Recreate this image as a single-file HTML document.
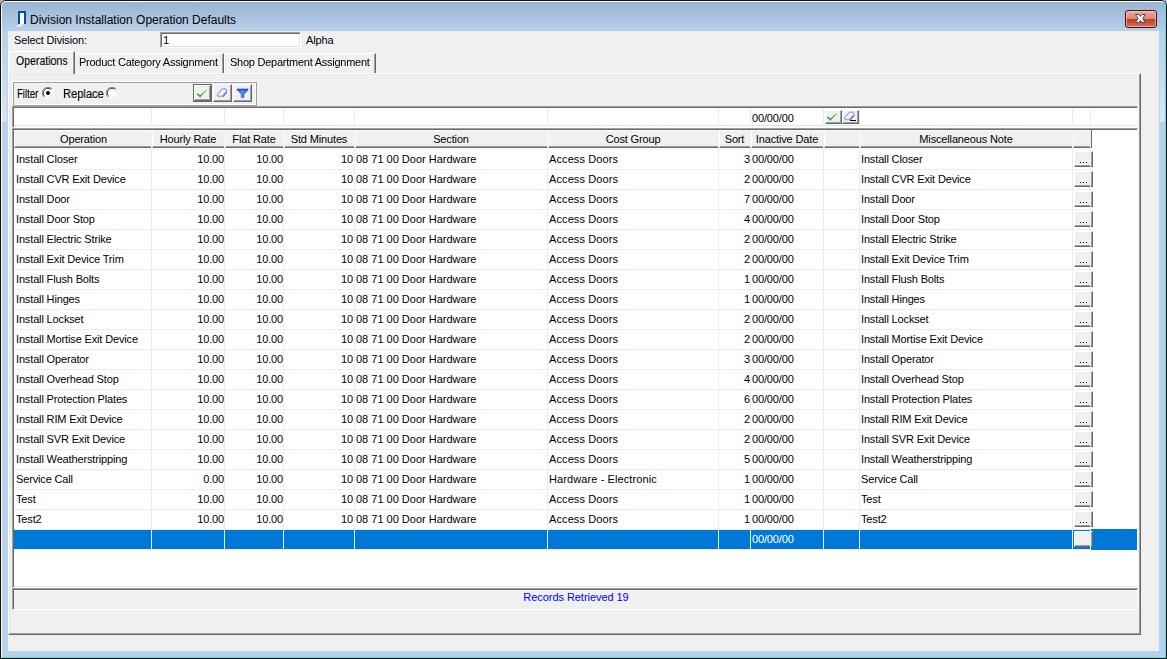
<!DOCTYPE html><html><head><meta charset="utf-8"><title>Division Installation Operation Defaults</title><style>

html,body{margin:0;padding:0}
body{width:1167px;height:659px;overflow:hidden;position:relative;background:#b4b4b4;font-family:"Liberation Sans",sans-serif;font-size:11px;color:#000;letter-spacing:-0.15px}
div,span{position:absolute;box-sizing:border-box;white-space:nowrap}
#win{left:0;top:0;width:1167px;height:659px;background:#b9d1ea;border:1px solid #111;border-radius:6px 6px 0 0;overflow:hidden}
#hl{left:0;top:0;width:1165px;height:657px;border-top:1px solid #fff;border-left:1px solid #fff;border-right:1px solid #3fe2ff;border-bottom:1px solid #3fe2ff;border-radius:5px 5px 0 0}
#cap{left:1px;top:1px;width:1163px;height:29px;background:linear-gradient(#98b3d1,#b9d1ea)}
#lgl{left:1px;top:1px;width:5px;height:120px;background:linear-gradient(#9bb6d3 0%,#b7cfe8 25%,#d9e7f5 100%)}
#rgl{left:1159px;top:1px;width:5px;height:120px;background:linear-gradient(#9bb6d3 0%,#b7cfe8 25%,#d9e7f5 100%)}
#title{left:29px;top:11px;font-size:12px;line-height:16px;letter-spacing:0;color:#000}
#client{left:7px;top:30px;width:1151px;height:620px;background:#f0f0f0}
.t{line-height:13px;height:13px}

</style></head><body>
<div id="win">
<div id="cap"></div><div id="lgl"></div><div id="rgl"></div><div id="hl"></div>
<svg style="position:absolute;left:13px;top:9px" width="16" height="18" viewBox="14 10 16 18"><polygon points="14.5,26.7 22,26.7 23.6,24 19.5,24" fill="#e2eaf4"/><rect x="18" y="11" width="8" height="13" fill="#0050a0"/><rect x="20" y="13" width="4" height="11" fill="#fff"/></svg>
<div id="title">Division Installation Operation Defaults</div>
<div style="left:1124px;top:9px;width:32px;height:18px;border:1px solid #47121c;border-radius:3px;background:linear-gradient(#e9a99b 0%,#dc8876 48%,#bd3a1c 50%,#d4705a 100%);box-shadow:inset 0 0 0 1px rgba(255,220,210,.55)"></div>
<svg style="position:absolute;left:1133px;top:12px" width="14" height="12" viewBox="1134 13 14 12"><polygon points="1135.5,14.5 1138.8,14.5 1140.4,16.5 1142,14.5 1145.3,14.5 1142.5,18.5 1145.3,22.5 1142,22.5 1140.4,20.5 1138.8,22.5 1135.5,22.5 1138.3,18.5" fill="#fff" stroke="#474c66" stroke-width="1" stroke-linejoin="round"/></svg>
<div id="client">
</div>
</div>
<div class="t" style="left:14px;top:34px;">Select Division:</div>
<div style="left:160px;top:32px;width:141px;height:16px;background:#fff;border-top:1px solid #a0a0a0;border-left:1px solid #a0a0a0;border-right:1px solid #fff;border-bottom:1px solid #fff"><div style="left:0;top:0;width:139px;height:14px;border-top:1px solid #696969;border-left:1px solid #696969;border-right:1px solid #e3e3e3;border-bottom:1px solid #e3e3e3"></div></div>
<div class="t" style="left:163px;top:34px;">1</div>
<div class="t" style="left:306px;top:34px;">Alpha</div>
<div style="left:8px;top:73px;width:1133px;height:562px;border-top:1px solid #fff;border-left:1px solid #fff;border-right:1px solid #696969;border-bottom:1px solid #696969"><div style="left:0;top:0;width:1131px;height:560px;border-top:1px solid #e8e8e8;border-left:1px solid #e8e8e8;border-right:1px solid #a0a0a0;border-bottom:1px solid #a0a0a0"></div></div>
<div style="left:8px;top:51px;width:67px;height:23px;background:#f0f0f0;border-top:1px solid #fff;border-left:1px solid #fff;border-right:1px solid #696969"><div style="left:0;top:0;width:65px;height:22px;border-right:1px solid #a0a0a0"></div></div>
<div class="t" style="left:16px;top:55px;font-size:12px;letter-spacing:0;transform:scaleX(.88);transform-origin:0 0;will-change:transform;-webkit-text-stroke:.15px #000">Operations</div>
<div style="left:75px;top:53px;width:149px;height:20px;border-top:1px solid #fff;border-right:1px solid #696969"><div style="left:0;top:0;width:148px;height:19px;border-right:1px solid #a0a0a0"></div></div>
<div class="t" style="left:79px;top:56px;letter-spacing:-0.25px">Product Category Assignment</div>
<div style="left:224px;top:53px;width:152px;height:20px;border-top:1px solid #fff;border-left:1px solid #fff;border-right:1px solid #696969"><div style="left:0;top:0;width:150px;height:19px;border-right:1px solid #a0a0a0"></div></div>
<div class="t" style="left:230px;top:56px;letter-spacing:-0.25px">Shop Department Assignment</div>
<div style="left:12px;top:81px;width:244px;height:24px;border:1px solid #fff"></div>
<div style="left:13px;top:82px;width:244px;height:24px;border:1px solid #a0a0a0"></div>
<div class="t" style="left:17px;top:88px;font-size:12px;letter-spacing:0;transform:scaleX(.80);transform-origin:0 0;will-change:transform;-webkit-text-stroke:.15px #000">Filter</div>
<div class="t" style="left:63px;top:88px;font-size:12px;letter-spacing:0;transform:scaleX(.93);transform-origin:0 0;will-change:transform;-webkit-text-stroke:.15px #000">Replace</div>
<svg style="position:absolute;left:42px;top:87px" width="12" height="12" viewBox="0 0 12 12"><circle cx="6" cy="6" r="5.5" fill="#fff"/><path d="M1.9 10.1 A5.5 5.5 0 0 1 10.1 1.9" fill="none" stroke="#808080" stroke-width="1"/><path d="M2.7 9.3 A4.5 4.5 0 0 1 9.3 2.7" fill="none" stroke="#404040" stroke-width="1"/><path d="M10.1 1.9 A5.5 5.5 0 0 1 1.9 10.1" fill="none" stroke="#fff" stroke-width="1"/><path d="M9.3 2.7 A4.5 4.5 0 0 1 2.7 9.3" fill="none" stroke="#e3e3e3" stroke-width="1"/><circle cx="6" cy="6" r="2" fill="#000"/></svg>
<svg style="position:absolute;left:106px;top:87px" width="12" height="12" viewBox="0 0 12 12"><circle cx="6" cy="6" r="5.5" fill="#fff"/><path d="M1.9 10.1 A5.5 5.5 0 0 1 10.1 1.9" fill="none" stroke="#808080" stroke-width="1"/><path d="M2.7 9.3 A4.5 4.5 0 0 1 9.3 2.7" fill="none" stroke="#404040" stroke-width="1"/><path d="M10.1 1.9 A5.5 5.5 0 0 1 1.9 10.1" fill="none" stroke="#fff" stroke-width="1"/><path d="M9.3 2.7 A4.5 4.5 0 0 1 2.7 9.3" fill="none" stroke="#e3e3e3" stroke-width="1"/></svg>
<div style="left:193px;top:84px;width:19px;height:18px;border:1px solid #696969;background:#f0f0f0"><div style="left:0;top:0;width:17px;height:16px;border-top:1px solid #fff;border-left:1px solid #fff;border-right:1px solid #696969;border-bottom:1px solid #696969"><div style="left:0;top:0;width:15px;height:14px;border-right:1px solid #a0a0a0;border-bottom:1px solid #a0a0a0"></div></div></div>
<div style="left:213px;top:84px;width:19px;height:18px;background:#f0f0f0;border-top:1px solid #fff;border-left:1px solid #fff;border-right:1px solid #696969;border-bottom:1px solid #696969"><div style="left:0;top:0;width:17px;height:16px;border-right:1px solid #a0a0a0;border-bottom:1px solid #a0a0a0"></div></div>
<div style="left:233px;top:84px;width:19px;height:18px;background:#f0f0f0;border-top:1px solid #fff;border-left:1px solid #fff;border-right:1px solid #696969;border-bottom:1px solid #696969"><div style="left:0;top:0;width:17px;height:16px;border-right:1px solid #a0a0a0;border-bottom:1px solid #a0a0a0"></div></div>
<svg style="position:absolute;left:195px;top:87px" width="15" height="13" viewBox="195 87 15 13"><path d="M196.7 94.3 L198.0 93.3 L200 95.2 L203.2 92.4 L206.5 89.8 L206.9 90.2 L203.6 93.60000000000001 L200.3 97.5 Z" fill="#46b646"/><path d="M197.2 94.0 L199.9 96.5 L201.6 94.9" fill="none" stroke="#32a232" stroke-width="1" stroke-linejoin="round"/></svg>
<svg style="position:absolute;left:215px;top:86px" width="15" height="14" viewBox="215 86 15 14"><polygon points="217.3,94.60000000000001 222.3,88.8 225.9,89.0 226.9,91.0 222.0,96.4 218.0,96.60000000000001" fill="#eef2fa" stroke="#6f8fca" stroke-width="1" stroke-linejoin="round"/><polygon points="222.4,96.7 227.0,91.60000000000001 227.0,92.8 223.2,97.10000000000001" fill="#3b5184"/><polygon points="217.8,95.60000000000001 222.0,95.4 222.4,96.8 218.2,96.9" fill="#9fb4da"/></svg>
<svg style="position:absolute;left:235px;top:87px" width="15" height="13" viewBox="235 87 15 13"><defs><linearGradient id="fg" x1="0" x2="1"><stop offset="0" stop-color="#1a4fe0"/><stop offset=".45" stop-color="#5c8cf5"/><stop offset="1" stop-color="#1a4fe0"/></linearGradient></defs><path d="M237.2 89 L248 89 L248 90 L244 94 L244 97.6 L241.3 97.6 L241.3 94 L237.2 90 Z" fill="url(#fg)" stroke="#1c4cdc" stroke-width=".6" stroke-linejoin="round"/><rect x="237" y="89" width="11.2" height="1.2" fill="#1a48d0"/></svg>
<div style="left:12px;top:106px;width:1126px;height:22px;background:#fff;border-top:1px solid #a0a0a0;border-left:1px solid #a0a0a0;border-bottom:1px solid #fff;border-right:1px solid #fff"><div style="left:0;top:0;width:1124px;height:20px;border-top:1px solid #696969;border-left:1px solid #696969"></div></div>
<div style="left:14px;top:125px;width:1123px;height:1px;background:#e3e3e3"></div>
<div style="left:151px;top:108px;width:1px;height:18px;background:#ececec"></div>
<div style="left:224px;top:108px;width:1px;height:18px;background:#ececec"></div>
<div style="left:283px;top:108px;width:1px;height:18px;background:#ececec"></div>
<div style="left:354px;top:108px;width:1px;height:18px;background:#ececec"></div>
<div style="left:547px;top:108px;width:1px;height:18px;background:#ececec"></div>
<div style="left:718px;top:108px;width:1px;height:18px;background:#ececec"></div>
<div style="left:750px;top:108px;width:1px;height:18px;background:#ececec"></div>
<div style="left:823px;top:108px;width:1px;height:18px;background:#ececec"></div>
<div style="left:859px;top:108px;width:1px;height:18px;background:#ececec"></div>
<div style="left:1072px;top:108px;width:1px;height:18px;background:#ececec"></div>
<div style="left:1090px;top:108px;width:1px;height:18px;background:#ececec"></div>
<div class="t" style="left:752px;top:112px;">00/00/00</div>
<div style="left:825px;top:110px;width:17px;height:14px;background:#f0f0f0;border-top:1px solid #fff;border-left:1px solid #fff;border-right:1px solid #696969;border-bottom:1px solid #696969"><div style="left:0;top:0;width:15px;height:12px;border-right:1px solid #a0a0a0;border-bottom:1px solid #a0a0a0"></div></div>
<div style="left:842px;top:110px;width:17px;height:14px;background:#f0f0f0;border-top:1px solid #fff;border-left:1px solid #fff;border-right:1px solid #696969;border-bottom:1px solid #696969"><div style="left:0;top:0;width:15px;height:12px;border-right:1px solid #a0a0a0;border-bottom:1px solid #a0a0a0"></div></div>
<svg style="position:absolute;left:826px;top:111px" width="14" height="11" viewBox="826 111 14 11"><path d="M826.9000000000001 117.6 L828.2 116.6 L830.2 118.5 L833.4000000000001 115.7 L836.7 113.1 L837.1 113.5 L833.8000000000001 116.9 L830.5 120.8 Z" fill="#46b646"/><path d="M827.4000000000001 117.3 L830.1 119.8 L831.8000000000001 118.2" fill="none" stroke="#32a232" stroke-width="1" stroke-linejoin="round"/></svg>
<svg style="position:absolute;left:843px;top:110px" width="15" height="12" viewBox="843 110 15 12"><polygon points="844.5999999999999,117.80000000000001 849.5999999999999,112.0 853.1999999999999,112.2 854.1999999999999,114.2 849.3,119.60000000000001 845.3,119.80000000000001" fill="#eef2fa" stroke="#6f8fca" stroke-width="1" stroke-linejoin="round"/><polygon points="849.6999999999999,119.9 854.3,114.80000000000001 854.3,116.0 850.5,120.30000000000001" fill="#3b5184"/><polygon points="845.0999999999999,118.80000000000001 849.3,118.60000000000001 849.6999999999999,120.0 845.5,120.10000000000001" fill="#9fb4da"/></svg>
<div style="left:850px;top:120px;width:6px;height:1px;background:#000"></div>
<div style="left:12px;top:128px;width:1126px;height:460px;background:#fff;border-top:1px solid #a0a0a0;border-left:1px solid #a0a0a0;border-bottom:1px solid #fff;border-right:1px solid #fff"><div style="left:0;top:0;width:1124px;height:458px;border-top:1px solid #696969;border-left:1px solid #696969"></div></div>
<div style="left:14px;top:586px;width:1123px;height:1px;background:#e3e3e3"></div>
<div style="left:14px;top:130px;width:1077px;height:18px;background:#f0f0f0"></div>
<div style="left:14px;top:130px;width:137px;height:18px;background:#f0f0f0;border-top:1px solid #fff;border-left:1px solid #fff;border-bottom:1px solid #696969"><div style="left:0;top:0;width:136px;height:16px;border-bottom:1px solid #a0a0a0"></div></div>
<div class="t" style="left:15px;top:133px;width:137px;text-align:center">Operation</div>
<div style="left:152px;top:130px;width:72px;height:18px;background:#f0f0f0;border-top:1px solid #fff;border-left:1px solid #fff;border-bottom:1px solid #696969"><div style="left:0;top:0;width:71px;height:16px;border-bottom:1px solid #a0a0a0"></div></div>
<div class="t" style="left:152px;top:133px;width:72px;text-align:center">Hourly Rate</div>
<div style="left:225px;top:130px;width:58px;height:18px;background:#f0f0f0;border-top:1px solid #fff;border-left:1px solid #fff;border-bottom:1px solid #696969"><div style="left:0;top:0;width:57px;height:16px;border-bottom:1px solid #a0a0a0"></div></div>
<div class="t" style="left:225px;top:133px;width:58px;text-align:center">Flat Rate</div>
<div style="left:284px;top:130px;width:70px;height:18px;background:#f0f0f0;border-top:1px solid #fff;border-left:1px solid #fff;border-bottom:1px solid #696969"><div style="left:0;top:0;width:69px;height:16px;border-bottom:1px solid #a0a0a0"></div></div>
<div class="t" style="left:284px;top:133px;width:70px;text-align:center">Std Minutes</div>
<div style="left:355px;top:130px;width:192px;height:18px;background:#f0f0f0;border-top:1px solid #fff;border-left:1px solid #fff;border-bottom:1px solid #696969"><div style="left:0;top:0;width:191px;height:16px;border-bottom:1px solid #a0a0a0"></div></div>
<div class="t" style="left:355px;top:133px;width:192px;text-align:center">Section</div>
<div style="left:548px;top:130px;width:170px;height:18px;background:#f0f0f0;border-top:1px solid #fff;border-left:1px solid #fff;border-bottom:1px solid #696969"><div style="left:0;top:0;width:169px;height:16px;border-bottom:1px solid #a0a0a0"></div></div>
<div class="t" style="left:548px;top:133px;width:170px;text-align:center">Cost Group</div>
<div style="left:719px;top:130px;width:31px;height:18px;background:#f0f0f0;border-top:1px solid #fff;border-left:1px solid #fff;border-bottom:1px solid #696969"><div style="left:0;top:0;width:30px;height:16px;border-bottom:1px solid #a0a0a0"></div></div>
<div class="t" style="left:719px;top:133px;width:31px;text-align:center">Sort</div>
<div style="left:751px;top:130px;width:72px;height:18px;background:#f0f0f0;border-top:1px solid #fff;border-left:1px solid #fff;border-bottom:1px solid #696969"><div style="left:0;top:0;width:71px;height:16px;border-bottom:1px solid #a0a0a0"></div></div>
<div class="t" style="left:751px;top:133px;width:72px;text-align:center">Inactive Date</div>
<div style="left:824px;top:130px;width:35px;height:18px;background:#f0f0f0;border-top:1px solid #fff;border-left:1px solid #fff;border-bottom:1px solid #696969"><div style="left:0;top:0;width:34px;height:16px;border-bottom:1px solid #a0a0a0"></div></div>
<div style="left:860px;top:130px;width:212px;height:18px;background:#f0f0f0;border-top:1px solid #fff;border-left:1px solid #fff;border-bottom:1px solid #696969"><div style="left:0;top:0;width:211px;height:16px;border-bottom:1px solid #a0a0a0"></div></div>
<div class="t" style="left:860px;top:133px;width:212px;text-align:center">Miscellaneous Note</div>
<div style="left:1073px;top:130px;width:17px;height:18px;background:#f0f0f0;border-top:1px solid #fff;border-left:1px solid #fff;border-bottom:1px solid #696969"><div style="left:0;top:0;width:16px;height:16px;border-bottom:1px solid #a0a0a0"></div></div>
<div style="left:1091px;top:130px;width:1px;height:18px;background:#696969"></div>
<div style="left:151px;top:148px;width:1px;height:401px;background:#ececec"></div>
<div style="left:224px;top:148px;width:1px;height:401px;background:#ececec"></div>
<div style="left:283px;top:148px;width:1px;height:401px;background:#ececec"></div>
<div style="left:354px;top:148px;width:1px;height:401px;background:#ececec"></div>
<div style="left:547px;top:148px;width:1px;height:401px;background:#ececec"></div>
<div style="left:718px;top:148px;width:1px;height:401px;background:#ececec"></div>
<div style="left:750px;top:148px;width:1px;height:401px;background:#ececec"></div>
<div style="left:823px;top:148px;width:1px;height:401px;background:#ececec"></div>
<div style="left:859px;top:148px;width:1px;height:401px;background:#ececec"></div>
<div style="left:1072px;top:148px;width:1px;height:401px;background:#ececec"></div>
<div style="left:1090px;top:148px;width:1px;height:401px;background:#ececec"></div>
<div style="left:14px;top:169px;width:1077px;height:1px;background:#ececec"></div>
<div style="left:14px;top:189px;width:1077px;height:1px;background:#ececec"></div>
<div style="left:14px;top:209px;width:1077px;height:1px;background:#ececec"></div>
<div style="left:14px;top:229px;width:1077px;height:1px;background:#ececec"></div>
<div style="left:14px;top:249px;width:1077px;height:1px;background:#ececec"></div>
<div style="left:14px;top:269px;width:1077px;height:1px;background:#ececec"></div>
<div style="left:14px;top:289px;width:1077px;height:1px;background:#ececec"></div>
<div style="left:14px;top:309px;width:1077px;height:1px;background:#ececec"></div>
<div style="left:14px;top:329px;width:1077px;height:1px;background:#ececec"></div>
<div style="left:14px;top:349px;width:1077px;height:1px;background:#ececec"></div>
<div style="left:14px;top:369px;width:1077px;height:1px;background:#ececec"></div>
<div style="left:14px;top:389px;width:1077px;height:1px;background:#ececec"></div>
<div style="left:14px;top:409px;width:1077px;height:1px;background:#ececec"></div>
<div style="left:14px;top:429px;width:1077px;height:1px;background:#ececec"></div>
<div style="left:14px;top:449px;width:1077px;height:1px;background:#ececec"></div>
<div style="left:14px;top:469px;width:1077px;height:1px;background:#ececec"></div>
<div style="left:14px;top:489px;width:1077px;height:1px;background:#ececec"></div>
<div style="left:14px;top:509px;width:1077px;height:1px;background:#ececec"></div>
<div style="left:14px;top:529px;width:1077px;height:1px;background:#ececec"></div>
<div style="left:14px;top:549px;width:1077px;height:1px;background:#ececec"></div>
<div style="left:14px;top:149px;width:1077px;height:1px;background:#f4f4f4"></div>
<div style="left:14px;top:530px;width:1123px;height:19px;background:#0078d7"></div>
<div style="left:1091px;top:529px;width:46px;height:21px;background:#0078d7"></div>
<div style="left:151px;top:530px;width:1px;height:19px;background:#e6f0fa"></div>
<div style="left:224px;top:530px;width:1px;height:19px;background:#e6f0fa"></div>
<div style="left:283px;top:530px;width:1px;height:19px;background:#e6f0fa"></div>
<div style="left:354px;top:530px;width:1px;height:19px;background:#e6f0fa"></div>
<div style="left:547px;top:530px;width:1px;height:19px;background:#e6f0fa"></div>
<div style="left:718px;top:530px;width:1px;height:19px;background:#e6f0fa"></div>
<div style="left:750px;top:530px;width:1px;height:19px;background:#e6f0fa"></div>
<div style="left:823px;top:530px;width:1px;height:19px;background:#e6f0fa"></div>
<div style="left:859px;top:530px;width:1px;height:19px;background:#e6f0fa"></div>
<div style="left:1072px;top:530px;width:1px;height:19px;background:#e6f0fa"></div>
<div style="left:1090px;top:530px;width:1px;height:19px;background:#e6f0fa"></div>
<div class="t" style="left:16px;top:153px;">Install Closer</div>
<div class="t" style="left:124px;top:153px;width:100px;text-align:right;">10.00</div>
<div class="t" style="left:183px;top:153px;width:100px;text-align:right;">10.00</div>
<div class="t" style="left:253px;top:153px;width:100px;text-align:right;">10</div>
<div class="t" style="left:356px;top:153px;letter-spacing:0">08 71 00 Door Hardware</div>
<div class="t" style="left:549px;top:153px;letter-spacing:0.1px">Access Doors</div>
<div class="t" style="left:650px;top:153px;width:100px;text-align:right;">3</div>
<div class="t" style="left:752px;top:153px;">00/00/00</div>
<div class="t" style="left:861px;top:153px;">Install Closer</div>
<div class="t" style="left:16px;top:173px;">Install CVR Exit Device</div>
<div class="t" style="left:124px;top:173px;width:100px;text-align:right;">10.00</div>
<div class="t" style="left:183px;top:173px;width:100px;text-align:right;">10.00</div>
<div class="t" style="left:253px;top:173px;width:100px;text-align:right;">10</div>
<div class="t" style="left:356px;top:173px;letter-spacing:0">08 71 00 Door Hardware</div>
<div class="t" style="left:549px;top:173px;letter-spacing:0.1px">Access Doors</div>
<div class="t" style="left:650px;top:173px;width:100px;text-align:right;">2</div>
<div class="t" style="left:752px;top:173px;">00/00/00</div>
<div class="t" style="left:861px;top:173px;">Install CVR Exit Device</div>
<div class="t" style="left:16px;top:193px;">Install Door</div>
<div class="t" style="left:124px;top:193px;width:100px;text-align:right;">10.00</div>
<div class="t" style="left:183px;top:193px;width:100px;text-align:right;">10.00</div>
<div class="t" style="left:253px;top:193px;width:100px;text-align:right;">10</div>
<div class="t" style="left:356px;top:193px;letter-spacing:0">08 71 00 Door Hardware</div>
<div class="t" style="left:549px;top:193px;letter-spacing:0.1px">Access Doors</div>
<div class="t" style="left:650px;top:193px;width:100px;text-align:right;">7</div>
<div class="t" style="left:752px;top:193px;">00/00/00</div>
<div class="t" style="left:861px;top:193px;">Install Door</div>
<div class="t" style="left:16px;top:213px;">Install Door Stop</div>
<div class="t" style="left:124px;top:213px;width:100px;text-align:right;">10.00</div>
<div class="t" style="left:183px;top:213px;width:100px;text-align:right;">10.00</div>
<div class="t" style="left:253px;top:213px;width:100px;text-align:right;">10</div>
<div class="t" style="left:356px;top:213px;letter-spacing:0">08 71 00 Door Hardware</div>
<div class="t" style="left:549px;top:213px;letter-spacing:0.1px">Access Doors</div>
<div class="t" style="left:650px;top:213px;width:100px;text-align:right;">4</div>
<div class="t" style="left:752px;top:213px;">00/00/00</div>
<div class="t" style="left:861px;top:213px;">Install Door Stop</div>
<div class="t" style="left:16px;top:233px;">Install Electric Strike</div>
<div class="t" style="left:124px;top:233px;width:100px;text-align:right;">10.00</div>
<div class="t" style="left:183px;top:233px;width:100px;text-align:right;">10.00</div>
<div class="t" style="left:253px;top:233px;width:100px;text-align:right;">10</div>
<div class="t" style="left:356px;top:233px;letter-spacing:0">08 71 00 Door Hardware</div>
<div class="t" style="left:549px;top:233px;letter-spacing:0.1px">Access Doors</div>
<div class="t" style="left:650px;top:233px;width:100px;text-align:right;">2</div>
<div class="t" style="left:752px;top:233px;">00/00/00</div>
<div class="t" style="left:861px;top:233px;">Install Electric Strike</div>
<div class="t" style="left:16px;top:253px;">Install Exit Device Trim</div>
<div class="t" style="left:124px;top:253px;width:100px;text-align:right;">10.00</div>
<div class="t" style="left:183px;top:253px;width:100px;text-align:right;">10.00</div>
<div class="t" style="left:253px;top:253px;width:100px;text-align:right;">10</div>
<div class="t" style="left:356px;top:253px;letter-spacing:0">08 71 00 Door Hardware</div>
<div class="t" style="left:549px;top:253px;letter-spacing:0.1px">Access Doors</div>
<div class="t" style="left:650px;top:253px;width:100px;text-align:right;">2</div>
<div class="t" style="left:752px;top:253px;">00/00/00</div>
<div class="t" style="left:861px;top:253px;">Install Exit Device Trim</div>
<div class="t" style="left:16px;top:273px;">Install Flush Bolts</div>
<div class="t" style="left:124px;top:273px;width:100px;text-align:right;">10.00</div>
<div class="t" style="left:183px;top:273px;width:100px;text-align:right;">10.00</div>
<div class="t" style="left:253px;top:273px;width:100px;text-align:right;">10</div>
<div class="t" style="left:356px;top:273px;letter-spacing:0">08 71 00 Door Hardware</div>
<div class="t" style="left:549px;top:273px;letter-spacing:0.1px">Access Doors</div>
<div class="t" style="left:650px;top:273px;width:100px;text-align:right;">1</div>
<div class="t" style="left:752px;top:273px;">00/00/00</div>
<div class="t" style="left:861px;top:273px;">Install Flush Bolts</div>
<div class="t" style="left:16px;top:293px;">Install Hinges</div>
<div class="t" style="left:124px;top:293px;width:100px;text-align:right;">10.00</div>
<div class="t" style="left:183px;top:293px;width:100px;text-align:right;">10.00</div>
<div class="t" style="left:253px;top:293px;width:100px;text-align:right;">10</div>
<div class="t" style="left:356px;top:293px;letter-spacing:0">08 71 00 Door Hardware</div>
<div class="t" style="left:549px;top:293px;letter-spacing:0.1px">Access Doors</div>
<div class="t" style="left:650px;top:293px;width:100px;text-align:right;">1</div>
<div class="t" style="left:752px;top:293px;">00/00/00</div>
<div class="t" style="left:861px;top:293px;">Install Hinges</div>
<div class="t" style="left:16px;top:313px;">Install Lockset</div>
<div class="t" style="left:124px;top:313px;width:100px;text-align:right;">10.00</div>
<div class="t" style="left:183px;top:313px;width:100px;text-align:right;">10.00</div>
<div class="t" style="left:253px;top:313px;width:100px;text-align:right;">10</div>
<div class="t" style="left:356px;top:313px;letter-spacing:0">08 71 00 Door Hardware</div>
<div class="t" style="left:549px;top:313px;letter-spacing:0.1px">Access Doors</div>
<div class="t" style="left:650px;top:313px;width:100px;text-align:right;">2</div>
<div class="t" style="left:752px;top:313px;">00/00/00</div>
<div class="t" style="left:861px;top:313px;">Install Lockset</div>
<div class="t" style="left:16px;top:333px;">Install Mortise Exit Device</div>
<div class="t" style="left:124px;top:333px;width:100px;text-align:right;">10.00</div>
<div class="t" style="left:183px;top:333px;width:100px;text-align:right;">10.00</div>
<div class="t" style="left:253px;top:333px;width:100px;text-align:right;">10</div>
<div class="t" style="left:356px;top:333px;letter-spacing:0">08 71 00 Door Hardware</div>
<div class="t" style="left:549px;top:333px;letter-spacing:0.1px">Access Doors</div>
<div class="t" style="left:650px;top:333px;width:100px;text-align:right;">2</div>
<div class="t" style="left:752px;top:333px;">00/00/00</div>
<div class="t" style="left:861px;top:333px;">Install Mortise Exit Device</div>
<div class="t" style="left:16px;top:353px;">Install Operator</div>
<div class="t" style="left:124px;top:353px;width:100px;text-align:right;">10.00</div>
<div class="t" style="left:183px;top:353px;width:100px;text-align:right;">10.00</div>
<div class="t" style="left:253px;top:353px;width:100px;text-align:right;">10</div>
<div class="t" style="left:356px;top:353px;letter-spacing:0">08 71 00 Door Hardware</div>
<div class="t" style="left:549px;top:353px;letter-spacing:0.1px">Access Doors</div>
<div class="t" style="left:650px;top:353px;width:100px;text-align:right;">3</div>
<div class="t" style="left:752px;top:353px;">00/00/00</div>
<div class="t" style="left:861px;top:353px;">Install Operator</div>
<div class="t" style="left:16px;top:373px;">Install Overhead Stop</div>
<div class="t" style="left:124px;top:373px;width:100px;text-align:right;">10.00</div>
<div class="t" style="left:183px;top:373px;width:100px;text-align:right;">10.00</div>
<div class="t" style="left:253px;top:373px;width:100px;text-align:right;">10</div>
<div class="t" style="left:356px;top:373px;letter-spacing:0">08 71 00 Door Hardware</div>
<div class="t" style="left:549px;top:373px;letter-spacing:0.1px">Access Doors</div>
<div class="t" style="left:650px;top:373px;width:100px;text-align:right;">4</div>
<div class="t" style="left:752px;top:373px;">00/00/00</div>
<div class="t" style="left:861px;top:373px;">Install Overhead Stop</div>
<div class="t" style="left:16px;top:393px;">Install Protection Plates</div>
<div class="t" style="left:124px;top:393px;width:100px;text-align:right;">10.00</div>
<div class="t" style="left:183px;top:393px;width:100px;text-align:right;">10.00</div>
<div class="t" style="left:253px;top:393px;width:100px;text-align:right;">10</div>
<div class="t" style="left:356px;top:393px;letter-spacing:0">08 71 00 Door Hardware</div>
<div class="t" style="left:549px;top:393px;letter-spacing:0.1px">Access Doors</div>
<div class="t" style="left:650px;top:393px;width:100px;text-align:right;">6</div>
<div class="t" style="left:752px;top:393px;">00/00/00</div>
<div class="t" style="left:861px;top:393px;">Install Protection Plates</div>
<div class="t" style="left:16px;top:413px;">Install RIM Exit Device</div>
<div class="t" style="left:124px;top:413px;width:100px;text-align:right;">10.00</div>
<div class="t" style="left:183px;top:413px;width:100px;text-align:right;">10.00</div>
<div class="t" style="left:253px;top:413px;width:100px;text-align:right;">10</div>
<div class="t" style="left:356px;top:413px;letter-spacing:0">08 71 00 Door Hardware</div>
<div class="t" style="left:549px;top:413px;letter-spacing:0.1px">Access Doors</div>
<div class="t" style="left:650px;top:413px;width:100px;text-align:right;">2</div>
<div class="t" style="left:752px;top:413px;">00/00/00</div>
<div class="t" style="left:861px;top:413px;">Install RIM Exit Device</div>
<div class="t" style="left:16px;top:433px;">Install SVR Exit Device</div>
<div class="t" style="left:124px;top:433px;width:100px;text-align:right;">10.00</div>
<div class="t" style="left:183px;top:433px;width:100px;text-align:right;">10.00</div>
<div class="t" style="left:253px;top:433px;width:100px;text-align:right;">10</div>
<div class="t" style="left:356px;top:433px;letter-spacing:0">08 71 00 Door Hardware</div>
<div class="t" style="left:549px;top:433px;letter-spacing:0.1px">Access Doors</div>
<div class="t" style="left:650px;top:433px;width:100px;text-align:right;">2</div>
<div class="t" style="left:752px;top:433px;">00/00/00</div>
<div class="t" style="left:861px;top:433px;">Install SVR Exit Device</div>
<div class="t" style="left:16px;top:453px;">Install Weatherstripping</div>
<div class="t" style="left:124px;top:453px;width:100px;text-align:right;">10.00</div>
<div class="t" style="left:183px;top:453px;width:100px;text-align:right;">10.00</div>
<div class="t" style="left:253px;top:453px;width:100px;text-align:right;">10</div>
<div class="t" style="left:356px;top:453px;letter-spacing:0">08 71 00 Door Hardware</div>
<div class="t" style="left:549px;top:453px;letter-spacing:0.1px">Access Doors</div>
<div class="t" style="left:650px;top:453px;width:100px;text-align:right;">5</div>
<div class="t" style="left:752px;top:453px;">00/00/00</div>
<div class="t" style="left:861px;top:453px;">Install Weatherstripping</div>
<div class="t" style="left:16px;top:473px;">Service Call</div>
<div class="t" style="left:124px;top:473px;width:100px;text-align:right;">0.00</div>
<div class="t" style="left:183px;top:473px;width:100px;text-align:right;">10.00</div>
<div class="t" style="left:253px;top:473px;width:100px;text-align:right;">10</div>
<div class="t" style="left:356px;top:473px;letter-spacing:0">08 71 00 Door Hardware</div>
<div class="t" style="left:549px;top:473px;letter-spacing:0.1px">Hardware - Electronic</div>
<div class="t" style="left:650px;top:473px;width:100px;text-align:right;">1</div>
<div class="t" style="left:752px;top:473px;">00/00/00</div>
<div class="t" style="left:861px;top:473px;">Service Call</div>
<div class="t" style="left:16px;top:493px;">Test</div>
<div class="t" style="left:124px;top:493px;width:100px;text-align:right;">10.00</div>
<div class="t" style="left:183px;top:493px;width:100px;text-align:right;">10.00</div>
<div class="t" style="left:253px;top:493px;width:100px;text-align:right;">10</div>
<div class="t" style="left:356px;top:493px;letter-spacing:0">08 71 00 Door Hardware</div>
<div class="t" style="left:549px;top:493px;letter-spacing:0.1px">Access Doors</div>
<div class="t" style="left:650px;top:493px;width:100px;text-align:right;">1</div>
<div class="t" style="left:752px;top:493px;">00/00/00</div>
<div class="t" style="left:861px;top:493px;">Test</div>
<div class="t" style="left:16px;top:513px;">Test2</div>
<div class="t" style="left:124px;top:513px;width:100px;text-align:right;">10.00</div>
<div class="t" style="left:183px;top:513px;width:100px;text-align:right;">10.00</div>
<div class="t" style="left:253px;top:513px;width:100px;text-align:right;">10</div>
<div class="t" style="left:356px;top:513px;letter-spacing:0">08 71 00 Door Hardware</div>
<div class="t" style="left:549px;top:513px;letter-spacing:0.1px">Access Doors</div>
<div class="t" style="left:650px;top:513px;width:100px;text-align:right;">1</div>
<div class="t" style="left:752px;top:513px;">00/00/00</div>
<div class="t" style="left:861px;top:513px;">Test2</div>
<div class="t" style="left:752px;top:533px;color:#fff">00/00/00</div>
<div style="left:1074px;top:151px;width:19px;height:16px;background:#f0f0f0;border-top:1px solid #fff;border-left:1px solid #fff;border-right:1px solid #696969;border-bottom:1px solid #696969"><div style="left:0;top:0;width:17px;height:14px;border-right:1px solid #a0a0a0;border-bottom:1px solid #a0a0a0"></div></div>
<div style="left:1080px;top:162px;width:1px;height:1px;background:#000"></div>
<div style="left:1083px;top:162px;width:1px;height:1px;background:#000"></div>
<div style="left:1086px;top:162px;width:1px;height:1px;background:#000"></div>
<div style="left:1074px;top:171px;width:19px;height:16px;background:#f0f0f0;border-top:1px solid #fff;border-left:1px solid #fff;border-right:1px solid #696969;border-bottom:1px solid #696969"><div style="left:0;top:0;width:17px;height:14px;border-right:1px solid #a0a0a0;border-bottom:1px solid #a0a0a0"></div></div>
<div style="left:1080px;top:182px;width:1px;height:1px;background:#000"></div>
<div style="left:1083px;top:182px;width:1px;height:1px;background:#000"></div>
<div style="left:1086px;top:182px;width:1px;height:1px;background:#000"></div>
<div style="left:1074px;top:191px;width:19px;height:16px;background:#f0f0f0;border-top:1px solid #fff;border-left:1px solid #fff;border-right:1px solid #696969;border-bottom:1px solid #696969"><div style="left:0;top:0;width:17px;height:14px;border-right:1px solid #a0a0a0;border-bottom:1px solid #a0a0a0"></div></div>
<div style="left:1080px;top:202px;width:1px;height:1px;background:#000"></div>
<div style="left:1083px;top:202px;width:1px;height:1px;background:#000"></div>
<div style="left:1086px;top:202px;width:1px;height:1px;background:#000"></div>
<div style="left:1074px;top:211px;width:19px;height:16px;background:#f0f0f0;border-top:1px solid #fff;border-left:1px solid #fff;border-right:1px solid #696969;border-bottom:1px solid #696969"><div style="left:0;top:0;width:17px;height:14px;border-right:1px solid #a0a0a0;border-bottom:1px solid #a0a0a0"></div></div>
<div style="left:1080px;top:222px;width:1px;height:1px;background:#000"></div>
<div style="left:1083px;top:222px;width:1px;height:1px;background:#000"></div>
<div style="left:1086px;top:222px;width:1px;height:1px;background:#000"></div>
<div style="left:1074px;top:231px;width:19px;height:16px;background:#f0f0f0;border-top:1px solid #fff;border-left:1px solid #fff;border-right:1px solid #696969;border-bottom:1px solid #696969"><div style="left:0;top:0;width:17px;height:14px;border-right:1px solid #a0a0a0;border-bottom:1px solid #a0a0a0"></div></div>
<div style="left:1080px;top:242px;width:1px;height:1px;background:#000"></div>
<div style="left:1083px;top:242px;width:1px;height:1px;background:#000"></div>
<div style="left:1086px;top:242px;width:1px;height:1px;background:#000"></div>
<div style="left:1074px;top:251px;width:19px;height:16px;background:#f0f0f0;border-top:1px solid #fff;border-left:1px solid #fff;border-right:1px solid #696969;border-bottom:1px solid #696969"><div style="left:0;top:0;width:17px;height:14px;border-right:1px solid #a0a0a0;border-bottom:1px solid #a0a0a0"></div></div>
<div style="left:1080px;top:262px;width:1px;height:1px;background:#000"></div>
<div style="left:1083px;top:262px;width:1px;height:1px;background:#000"></div>
<div style="left:1086px;top:262px;width:1px;height:1px;background:#000"></div>
<div style="left:1074px;top:271px;width:19px;height:16px;background:#f0f0f0;border-top:1px solid #fff;border-left:1px solid #fff;border-right:1px solid #696969;border-bottom:1px solid #696969"><div style="left:0;top:0;width:17px;height:14px;border-right:1px solid #a0a0a0;border-bottom:1px solid #a0a0a0"></div></div>
<div style="left:1080px;top:282px;width:1px;height:1px;background:#000"></div>
<div style="left:1083px;top:282px;width:1px;height:1px;background:#000"></div>
<div style="left:1086px;top:282px;width:1px;height:1px;background:#000"></div>
<div style="left:1074px;top:291px;width:19px;height:16px;background:#f0f0f0;border-top:1px solid #fff;border-left:1px solid #fff;border-right:1px solid #696969;border-bottom:1px solid #696969"><div style="left:0;top:0;width:17px;height:14px;border-right:1px solid #a0a0a0;border-bottom:1px solid #a0a0a0"></div></div>
<div style="left:1080px;top:302px;width:1px;height:1px;background:#000"></div>
<div style="left:1083px;top:302px;width:1px;height:1px;background:#000"></div>
<div style="left:1086px;top:302px;width:1px;height:1px;background:#000"></div>
<div style="left:1074px;top:311px;width:19px;height:16px;background:#f0f0f0;border-top:1px solid #fff;border-left:1px solid #fff;border-right:1px solid #696969;border-bottom:1px solid #696969"><div style="left:0;top:0;width:17px;height:14px;border-right:1px solid #a0a0a0;border-bottom:1px solid #a0a0a0"></div></div>
<div style="left:1080px;top:322px;width:1px;height:1px;background:#000"></div>
<div style="left:1083px;top:322px;width:1px;height:1px;background:#000"></div>
<div style="left:1086px;top:322px;width:1px;height:1px;background:#000"></div>
<div style="left:1074px;top:331px;width:19px;height:16px;background:#f0f0f0;border-top:1px solid #fff;border-left:1px solid #fff;border-right:1px solid #696969;border-bottom:1px solid #696969"><div style="left:0;top:0;width:17px;height:14px;border-right:1px solid #a0a0a0;border-bottom:1px solid #a0a0a0"></div></div>
<div style="left:1080px;top:342px;width:1px;height:1px;background:#000"></div>
<div style="left:1083px;top:342px;width:1px;height:1px;background:#000"></div>
<div style="left:1086px;top:342px;width:1px;height:1px;background:#000"></div>
<div style="left:1074px;top:351px;width:19px;height:16px;background:#f0f0f0;border-top:1px solid #fff;border-left:1px solid #fff;border-right:1px solid #696969;border-bottom:1px solid #696969"><div style="left:0;top:0;width:17px;height:14px;border-right:1px solid #a0a0a0;border-bottom:1px solid #a0a0a0"></div></div>
<div style="left:1080px;top:362px;width:1px;height:1px;background:#000"></div>
<div style="left:1083px;top:362px;width:1px;height:1px;background:#000"></div>
<div style="left:1086px;top:362px;width:1px;height:1px;background:#000"></div>
<div style="left:1074px;top:371px;width:19px;height:16px;background:#f0f0f0;border-top:1px solid #fff;border-left:1px solid #fff;border-right:1px solid #696969;border-bottom:1px solid #696969"><div style="left:0;top:0;width:17px;height:14px;border-right:1px solid #a0a0a0;border-bottom:1px solid #a0a0a0"></div></div>
<div style="left:1080px;top:382px;width:1px;height:1px;background:#000"></div>
<div style="left:1083px;top:382px;width:1px;height:1px;background:#000"></div>
<div style="left:1086px;top:382px;width:1px;height:1px;background:#000"></div>
<div style="left:1074px;top:391px;width:19px;height:16px;background:#f0f0f0;border-top:1px solid #fff;border-left:1px solid #fff;border-right:1px solid #696969;border-bottom:1px solid #696969"><div style="left:0;top:0;width:17px;height:14px;border-right:1px solid #a0a0a0;border-bottom:1px solid #a0a0a0"></div></div>
<div style="left:1080px;top:402px;width:1px;height:1px;background:#000"></div>
<div style="left:1083px;top:402px;width:1px;height:1px;background:#000"></div>
<div style="left:1086px;top:402px;width:1px;height:1px;background:#000"></div>
<div style="left:1074px;top:411px;width:19px;height:16px;background:#f0f0f0;border-top:1px solid #fff;border-left:1px solid #fff;border-right:1px solid #696969;border-bottom:1px solid #696969"><div style="left:0;top:0;width:17px;height:14px;border-right:1px solid #a0a0a0;border-bottom:1px solid #a0a0a0"></div></div>
<div style="left:1080px;top:422px;width:1px;height:1px;background:#000"></div>
<div style="left:1083px;top:422px;width:1px;height:1px;background:#000"></div>
<div style="left:1086px;top:422px;width:1px;height:1px;background:#000"></div>
<div style="left:1074px;top:431px;width:19px;height:16px;background:#f0f0f0;border-top:1px solid #fff;border-left:1px solid #fff;border-right:1px solid #696969;border-bottom:1px solid #696969"><div style="left:0;top:0;width:17px;height:14px;border-right:1px solid #a0a0a0;border-bottom:1px solid #a0a0a0"></div></div>
<div style="left:1080px;top:442px;width:1px;height:1px;background:#000"></div>
<div style="left:1083px;top:442px;width:1px;height:1px;background:#000"></div>
<div style="left:1086px;top:442px;width:1px;height:1px;background:#000"></div>
<div style="left:1074px;top:451px;width:19px;height:16px;background:#f0f0f0;border-top:1px solid #fff;border-left:1px solid #fff;border-right:1px solid #696969;border-bottom:1px solid #696969"><div style="left:0;top:0;width:17px;height:14px;border-right:1px solid #a0a0a0;border-bottom:1px solid #a0a0a0"></div></div>
<div style="left:1080px;top:462px;width:1px;height:1px;background:#000"></div>
<div style="left:1083px;top:462px;width:1px;height:1px;background:#000"></div>
<div style="left:1086px;top:462px;width:1px;height:1px;background:#000"></div>
<div style="left:1074px;top:471px;width:19px;height:16px;background:#f0f0f0;border-top:1px solid #fff;border-left:1px solid #fff;border-right:1px solid #696969;border-bottom:1px solid #696969"><div style="left:0;top:0;width:17px;height:14px;border-right:1px solid #a0a0a0;border-bottom:1px solid #a0a0a0"></div></div>
<div style="left:1080px;top:482px;width:1px;height:1px;background:#000"></div>
<div style="left:1083px;top:482px;width:1px;height:1px;background:#000"></div>
<div style="left:1086px;top:482px;width:1px;height:1px;background:#000"></div>
<div style="left:1074px;top:491px;width:19px;height:16px;background:#f0f0f0;border-top:1px solid #fff;border-left:1px solid #fff;border-right:1px solid #696969;border-bottom:1px solid #696969"><div style="left:0;top:0;width:17px;height:14px;border-right:1px solid #a0a0a0;border-bottom:1px solid #a0a0a0"></div></div>
<div style="left:1080px;top:502px;width:1px;height:1px;background:#000"></div>
<div style="left:1083px;top:502px;width:1px;height:1px;background:#000"></div>
<div style="left:1086px;top:502px;width:1px;height:1px;background:#000"></div>
<div style="left:1074px;top:511px;width:19px;height:16px;background:#f0f0f0;border-top:1px solid #fff;border-left:1px solid #fff;border-right:1px solid #696969;border-bottom:1px solid #696969"><div style="left:0;top:0;width:17px;height:14px;border-right:1px solid #a0a0a0;border-bottom:1px solid #a0a0a0"></div></div>
<div style="left:1080px;top:522px;width:1px;height:1px;background:#000"></div>
<div style="left:1083px;top:522px;width:1px;height:1px;background:#000"></div>
<div style="left:1086px;top:522px;width:1px;height:1px;background:#000"></div>
<div style="left:1074px;top:531px;width:19px;height:16px;background:#f0f0f0;border-top:1px solid #fff;border-left:1px solid #fff;border-right:1px solid #696969;border-bottom:1px solid #696969"><div style="left:0;top:0;width:17px;height:14px;border-right:1px solid #a0a0a0;border-bottom:1px solid #a0a0a0"></div></div>
<div style="left:1080px;top:542px;width:1px;height:1px;background:#fff"></div>
<div style="left:1083px;top:542px;width:1px;height:1px;background:#fff"></div>
<div style="left:1086px;top:542px;width:1px;height:1px;background:#fff"></div>
<div style="left:1090px;top:148px;width:1px;height:381px;background:#ececec"></div>
<div style="left:1090px;top:530px;width:1px;height:19px;background:#e6f0fa"></div>
<div style="left:12px;top:588px;width:1126px;height:22px;border-top:1px solid #a0a0a0;border-left:1px solid #a0a0a0;border-bottom:1px solid #fff;border-right:1px solid #fff"><div style="left:0;top:0;width:1124px;height:20px;border-top:1px solid #696969;border-left:1px solid #696969"><div style="left:0;top:0;width:1123px;height:1px;background:#fafafa"></div></div></div>
<div class="t" style="left:13px;top:591px;width:1126px;text-align:center;color:#0000ff;letter-spacing:-0.05px">Records Retrieved 19</div>
</body></html>
